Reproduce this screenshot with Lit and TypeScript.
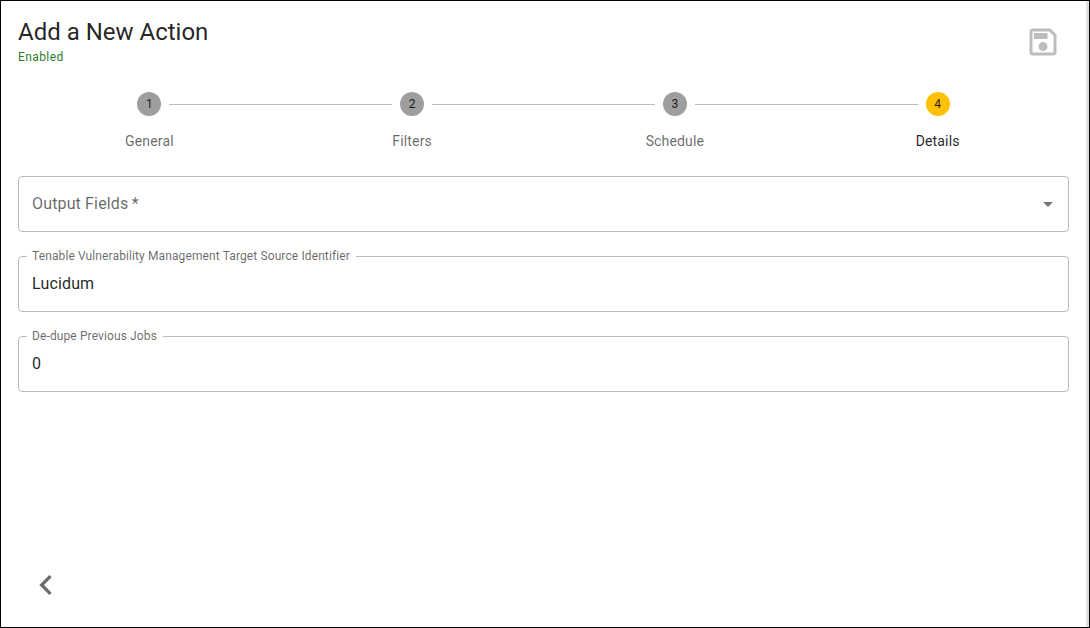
import { LitElement, html, css } from "lit";
import { customElement } from "lit/decorators.js";

const steps = [
  { n: 1, label: "General" },
  { n: 2, label: "Filters" },
  { n: 3, label: "Schedule" },
  { n: 4, label: "Details", active: true },
];

@customElement("app-root")
export class AppRoot extends LitElement {
  static styles = css`
    :host {
      display: block;
      width: 1090px;
      height: 628px;
      box-sizing: border-box;
      border: 1px solid #000;
      background: #fff;
      font-family: Roboto, "Liberation Sans", sans-serif;
      color: rgba(0, 0, 0, 0.87);
      overflow: hidden;
    }
    .page {
      display: flex;
      flex-direction: column;
      height: 100%;
      box-sizing: border-box;
      padding: 0 17px 0 17px;
      border-right: 3px solid #e0e0e0;
    }
    .head {
      display: flex;
      justify-content: space-between;
      padding-top: 16px;
      height: 91px;
      box-sizing: border-box;
    }
    h1 {
      margin: 0;
      font-size: 24px;
      font-weight: 400;
      line-height: 30px;
    }
    .status {
      font-size: 12px;
      line-height: 16px;
      letter-spacing: 0.4px;
      color: #2e7d32;
      margin-top: 2px;
    }
    .save {
      width: 36px;
      height: 36px;
      margin: 6.5px 8px 0 0;
      fill: #bdbdbd;
      display: block;
    }
    .stepper {
      display: flex;
      align-items: flex-start;
    }
    .step {
      flex: 1 1 0;
      display: flex;
      flex-direction: column;
      align-items: center;
      position: relative;
    }
    .line {
      position: absolute;
      top: 12px;
      height: 1px;
      background: #bdbdbd;
      left: calc(-50% + 20px);
      right: calc(50% + 20px);
    }
    .dot {
      width: 24px;
      height: 24px;
      border-radius: 50%;
      background: #9e9e9e;
      font-size: 12px;
      line-height: 24px;
      text-align: center;
    }
    .step.active .dot {
      background: #ffc107;
    }
    .label {
      margin-top: 15px;
      font-size: 14px;
      line-height: 20px;
      letter-spacing: 0.15px;
      color: rgba(0, 0, 0, 0.6);
    }
    .step.active .label {
      color: rgba(0, 0, 0, 0.87);
    }
    .fields {
      display: flex;
      flex-direction: column;
      gap: 24px;
      margin-top: 25px;
    }
    .field {
      position: relative;
      height: 56px;
      box-sizing: border-box;
      border: 1px solid #bdbdbd;
      border-radius: 4px;
      padding: 0 13px 2px;
      display: flex;
      align-items: center;
      justify-content: space-between;
      font-size: 16px;
      letter-spacing: 0.15px;
    }
    .placeholder {
      color: rgba(0, 0, 0, 0.6);
    }
    .legend {
      position: absolute;
      top: -8px;
      left: 8px;
      padding: 0 6px 0 5px;
      background: #fff;
      font-size: 12px;
      line-height: 14px;
      letter-spacing: 0.1125px;
      color: rgba(0, 0, 0, 0.6);
      white-space: nowrap;
    }
    .caret {
      width: 24px;
      height: 24px;
      margin: 2px -5px 0 0;
      fill: rgba(0, 0, 0, 0.54);
      display: block;
    }
    .back {
      margin-top: auto;
      margin-bottom: 22px;
      margin-left: 8px;
      width: 40px;
      height: 40px;
      fill: #6b6b6b;
      display: block;
    }
  `;

  render() {
    return html`
      <div class="page">
        <div class="head">
          <div>
            <h1>Add a New Action</h1>
            <div class="status">Enabled</div>
          </div>
          <svg class="save" viewBox="0 0 24 24">
            <path d="M17 3H5c-1.11 0-2 .9-2 2v14c0 1.1.89 2 2 2h14c1.1 0 2-.9 2-2V7l-4-4zm2 16H5V5h11.17L19 7.83V19zm-7-7c-1.66 0-3 1.34-3 3s1.34 3 3 3 3-1.34 3-3-1.34-3-3-3zM6 6h9v4H6z" />
          </svg>
        </div>
        <div class="stepper">
          ${steps.map(
            (s, i) => html`
              <div class="step ${s.active ? "active" : ""}">
                ${i > 0 ? html`<div class="line"></div>` : ""}
                <div class="dot">${s.n}</div>
                <div class="label">${s.label}</div>
              </div>
            `
          )}
        </div>
        <div class="fields">
          <div class="field">
            <span class="placeholder">Output Fields&thinsp;*</span>
            <svg class="caret" viewBox="0 0 24 24"><path d="M7 10l5 5 5-5z" /></svg>
          </div>
          <div class="field">
            <span class="legend">Tenable Vulnerability Management Target Source Identifier</span>
            <span>Lucidum</span>
          </div>
          <div class="field">
            <span class="legend">De-dupe Previous Jobs</span>
            <span>0</span>
          </div>
        </div>
        <svg class="back" viewBox="0 0 24 24">
          <path d="M15.41 7.41L14 6l-6 6 6 6 1.41-1.41L10.83 12z" />
        </svg>
      </div>
    `;
  }
}
